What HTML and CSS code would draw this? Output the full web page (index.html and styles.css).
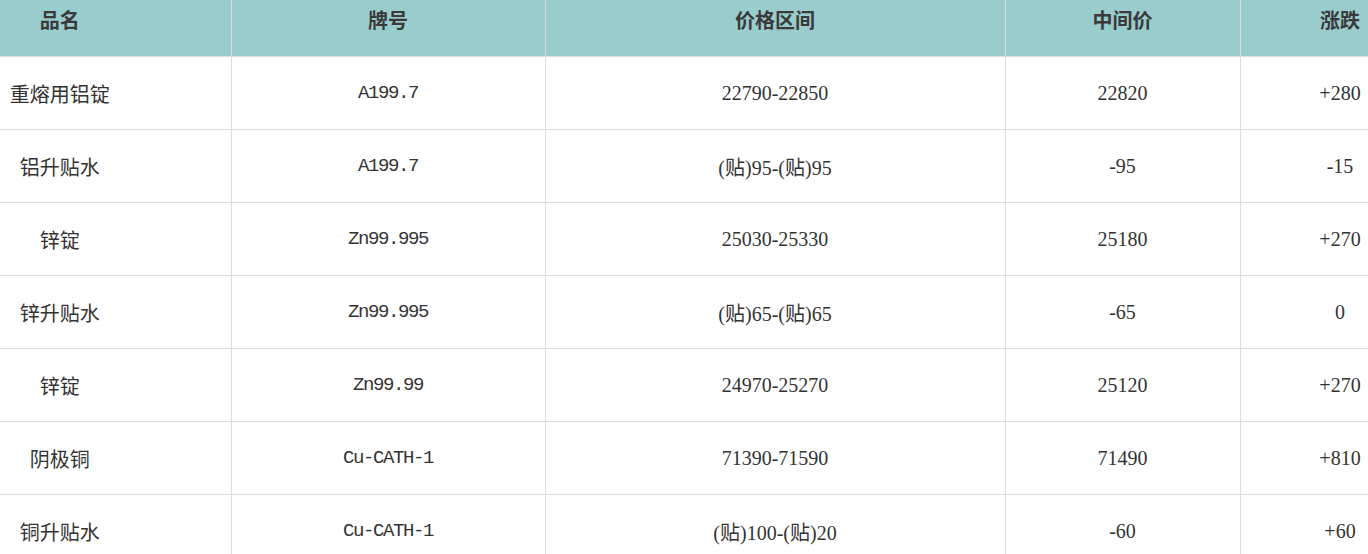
FILE: index.html
```html
<!DOCTYPE html>
<html lang="zh">
<head>
<meta charset="utf-8">
<link rel="stylesheet" href="styles.css">
</head>
<body>
<div class="wrap">
<table class="price">
  <colgroup>
    <col class="c1"><col class="c2"><col class="c3"><col class="c4"><col class="c5">
  </colgroup>
  <thead>
    <tr><th class="name">品名</th><th>牌号</th><th>价格区间</th><th>中间价</th><th>涨跌</th></tr>
  </thead>
  <tbody>
    <tr><td class="name">重熔用铝锭</td><td class="code">A199.7</td><td>22790-22850</td><td>22820</td><td>+280</td></tr>
    <tr><td class="name">铝升贴水</td><td class="code">A199.7</td><td>(贴)95-(贴)95</td><td>-95</td><td>-15</td></tr>
    <tr><td class="name">锌锭</td><td class="code">Zn99.995</td><td>25030-25330</td><td>25180</td><td>+270</td></tr>
    <tr><td class="name">锌升贴水</td><td class="code">Zn99.995</td><td>(贴)65-(贴)65</td><td>-65</td><td>0</td></tr>
    <tr><td class="name">锌锭</td><td class="code">Zn99.99</td><td>24970-25270</td><td>25120</td><td>+270</td></tr>
    <tr><td class="name">阴极铜</td><td class="code">Cu-CATH-1</td><td>71390-71590</td><td>71490</td><td>+810</td></tr>
    <tr><td class="name">铜升贴水</td><td class="code">Cu-CATH-1</td><td>(贴)100-(贴)20</td><td>-60</td><td>+60</td></tr>
  </tbody>
</table>
</div>
</body>
</html>
```
FILE: styles.css
```css
html, body {
  margin: 0;
  padding: 0;
  background: #fff;
  overflow: hidden;
}
.wrap {
  width: 100%;
  overflow: hidden;
}
.price {
  border-collapse: collapse;
  table-layout: fixed;
  width: 1440px;
  font-family: "Liberation Serif", "Noto Sans CJK SC", serif;
  font-size: 20px;
  color: #333;
}
.c1 { width: 231px; }
.c2 { width: 314px; }
.c3 { width: 460px; }
.c4 { width: 235px; }
.c5 { width: 200px; }
.price th {
  background: #99cccc;
  height: 56px;
  padding: 0;
  line-height: 42px;
  vertical-align: top;
  font-weight: bold;
  color: #3a3a3a;
  border-right: 1px solid #dcdcdc;
  border-bottom: 1px solid #dcdcdc;
  text-align: center;
}
.price td {
  height: 72px;
  padding: 0;
  text-align: center;
  vertical-align: middle;
  border-right: 1px solid #dcdcdc;
  border-bottom: 1px solid #dcdcdc;
}
.price .name {
  padding-right: 111px;
}
.price td.code {
  font-family: "Liberation Mono", "Noto Sans CJK SC", monospace;
  font-size: 19px;
  letter-spacing: -1.4px;
}
```
